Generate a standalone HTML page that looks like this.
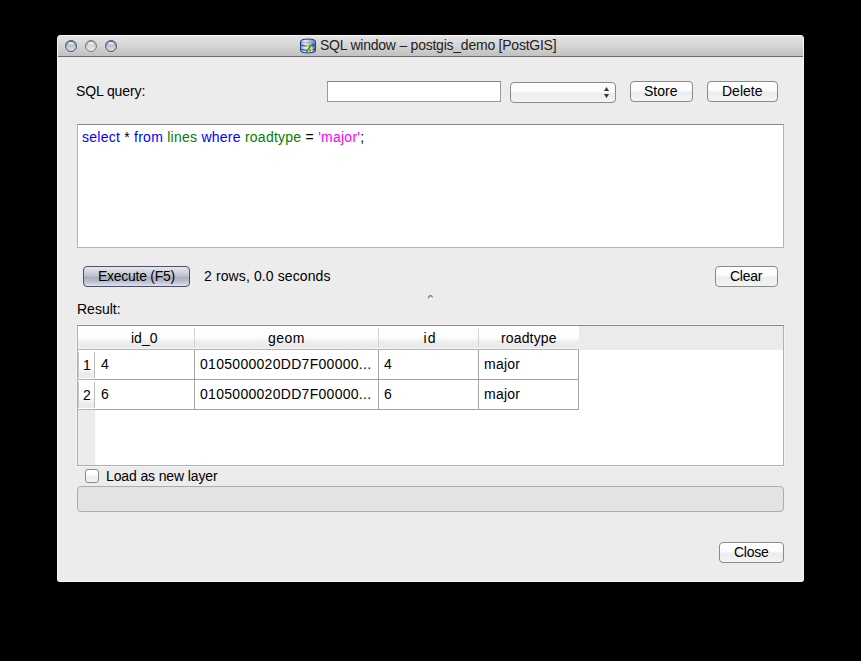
<!DOCTYPE html>
<html><head><meta charset="utf-8">
<style>
*{box-sizing:border-box;margin:0;padding:0}
html,body{width:861px;height:661px;background:#000;overflow:hidden}
body{position:relative;font-family:"Liberation Sans",sans-serif;font-size:14px;color:#000}
.a{position:absolute}
.t{position:absolute;white-space:pre;line-height:16px;height:16px}
#win{left:57px;top:35px;width:747px;height:547px;background:#ececec;border-radius:4px 4px 3px 3px;overflow:hidden;border:1px solid #f7f7f7;border-top:0}
#tb{left:-1px;top:0;width:747px;height:22px;background:linear-gradient(#e3e3e3 0%,#d4d4d4 50%,#c1c1c1 100%);border-top:1px solid #f7f7f7;border-bottom:1px solid #6c6c6c}
.light{width:12px;height:12px;border-radius:50%;top:4px;border:1px solid #4f5a6b;background:linear-gradient(#8593a8 0%,#aeb9c8 30%,#c3ccd8 60%,#d8dee7 100%);box-shadow:inset 0 1px 1px rgba(60,70,90,.5)}
.light::after{content:"";position:absolute;left:2px;top:1px;width:6px;height:3px;border-radius:50%;background:linear-gradient(rgba(255,255,255,.95),rgba(255,255,255,.2))}
.light.dis{border-color:#7c7c7c;background:linear-gradient(#b4b4b4 0%,#d0d0d0 35%,#dedede 65%,#ececec 100%);box-shadow:inset 0 1px 1px rgba(80,80,80,.4)}
.btn{position:absolute;height:21px;border:1px solid #8a8a8a;border-radius:4px;background:linear-gradient(#ffffff 0%,#fbfbfb 45%,#ececec 55%,#f4f4f4 100%)}
.h{font-size:14px}
.c{font-size:14px}
.rh{width:17px;height:26px;background:linear-gradient(#fff 0%,#fdfdfd 62%,#ececec 82%,#ebebeb 100%);border-left:1px solid #c6c6c6;border-right:1px solid #bcbcbc}
.field{position:absolute;background:#fff;border:1px solid #9a9a9a;border-top-color:#828282}
</style></head><body>
<div id="win" class="a">
  <div id="tb" class="a">
    <div class="a light" style="left:8px"></div>
    <div class="a light dis" style="left:28px"></div>
    <div class="a light" style="left:48px"></div>
  </div>
</div>
<!-- title -->
<svg class="a" style="left:300px;top:38px" width="16" height="16" viewBox="0 0 16 16">
<defs><linearGradient id="cy" x1="0" x2="1" y1="0" y2="0"><stop offset="0" stop-color="#7d93cc"/><stop offset=".3" stop-color="#e4ebf8"/><stop offset=".65" stop-color="#a9bbe0"/><stop offset="1" stop-color="#5570b0"/></linearGradient></defs>
<path d="M.5 3.2C.5 .4 15.5 .4 15.5 3.2V12.8C15.5 15.6 .5 15.6 .5 12.8Z" fill="url(#cy)" stroke="#22387c"/>
<path d="M1 3.6C2 5.2 14 5.2 15 3.6" fill="none" stroke="#8aa0d4" stroke-width=".8"/>
<path d="M.8 6.4C.8 8.6 15.2 8.6 15.2 6.4M.8 10.6C.8 12.8 15.2 12.8 15.2 10.6" fill="none" stroke="#22387c" stroke-width="1"/>
<path d="M7.6 6.6C9 7.8 9.8 10.6 9.2 13.6L7.4 13.9C7.7 11.6 7.1 9.6 6 8.4Z" fill="#e3ec34"/>
<path d="M10.8 7C12.4 8.4 13 11 12.6 14L11 14.1C11.2 11.8 10.6 9.6 9.7 8.4Z" fill="#e3ec34"/>
<path d="M13.6 5.2C11 7.4 8.4 10.6 6.3 14.2" fill="none" stroke="#2f8f2a" stroke-width="1.3"/>
</svg>
<div class="t" style="left:320px;top:37px;color:#222;letter-spacing:-0.235px">SQL window – postgis_demo [PostGIS]</div>
<!-- SQL query row -->
<div class="t" style="left:76px;top:83px;letter-spacing:-0.11px">SQL query:</div>
<div class="field" style="left:327px;top:81px;width:174px;height:21px"></div>
<div class="btn" style="left:510px;top:82px;width:106px;height:21px"></div>
<svg class="a" style="left:600px;top:84px" width="12" height="16" viewBox="0 0 12 16"><path d="M3.9 7H9.1L6.5 3Z" fill="#3a3a3a"/><path d="M3.9 10H9.1L6.5 14Z" fill="#3a3a3a"/></svg>
<div class="btn" style="left:630px;top:81px;width:63px"></div>
<div class="t" style="left:644px;top:83px">Store</div>
<div class="btn" style="left:707px;top:81px;width:71px"></div>
<div class="t" style="left:722px;top:83px">Delete</div>
<!-- editor -->
<div class="field" style="left:77px;top:124px;width:707px;height:124px;border-color:#b4b4b4;border-top-color:#8a8a8a"></div>
<div class="t" style="left:82px;top:129px;font-size:14px;letter-spacing:0.25px"><span style="color:#00f">select</span> * <span style="color:#00f">from</span> <span style="color:#008000">lines</span> <span style="color:#00f">where</span> <span style="color:#008000">roadtype</span> = <span style="color:#f0f">'major'</span>;</div>
<!-- execute row -->
<div class="btn" style="left:83px;top:266px;width:107px;border-color:#4e4f6a;background:linear-gradient(#e4e7ee 0%,#cdd1da 30%,#bcc1cd 48%,#a9afbe 55%,#b9bfcc 75%,#d2d6df 92%,#e2e5eb 100%)"></div>
<div class="t" style="left:98px;top:268px;letter-spacing:-0.27px">Execute (F5)</div>
<div class="t" style="left:204px;top:268px;letter-spacing:0.11px">2 rows, 0.0 seconds</div>
<div class="btn" style="left:715px;top:266px;width:63px"></div>
<div class="t" style="left:730px;top:268px;letter-spacing:-0.25px">Clear</div>
<div class="t" style="left:77px;top:301px">Result:</div>
<svg class="a" style="left:426px;top:292px" width="9" height="9" viewBox="0 0 9 9"><defs><linearGradient id="sp" x1="0" x2="1" y1="0" y2="1"><stop offset="0" stop-color="#555"/><stop offset="1" stop-color="#b0b0b0"/></linearGradient></defs><path d="M1.8 6.2C2.2 4 3.4 3 4.6 3C5.8 3 6.8 4 7.2 5.6L6 6C5.6 5 5.2 4.6 4.6 4.6C3.8 4.6 3.4 5.2 3 6.4Z" fill="url(#sp)"/><ellipse cx="4.8" cy="6.6" rx="1.4" ry=".9" fill="#fdfdfd"/></svg>
<!-- table -->
<div class="a" style="left:76px;top:324px;width:709px;height:143px;border:1px solid #f3f3f3"></div>
<div class="a" style="left:77px;top:325px;width:707px;height:141px;background:#fff;border:1px solid #b0b0b0;border-top-color:#8a8a8a"></div>
<!-- header -->
<div class="a" style="left:78px;top:326px;width:501px;height:23px;background:linear-gradient(#ffffff 0px,#fdfdfd 12px,#ededed 16px,#ebebeb 22px,#f3f3f3 22px,#f3f3f3 23px)"></div>
<div class="a" style="left:579px;top:326px;width:204px;height:24px;background:#ebebeb"></div>
<div class="a" style="left:78px;top:349px;width:501px;height:1px;background:#b4b4b4"></div>
<div class="a" style="left:194px;top:328px;width:1px;height:19px;background:#d4d4d4"></div>
<div class="a" style="left:378px;top:328px;width:1px;height:19px;background:#d4d4d4"></div>
<div class="a" style="left:478px;top:328px;width:1px;height:19px;background:#d4d4d4"></div>
<div class="t h" style="left:131px;top:330px">id_0</div>
<div class="t h" style="left:268px;top:330px;letter-spacing:0.5px">geom</div>
<div class="t h" style="left:423.5px;top:330px;letter-spacing:1.1px">id</div>
<div class="t h" style="left:501px;top:330px;letter-spacing:0.15px">roadtype</div>
<!-- row header strip -->
<div class="a" style="left:78px;top:350px;width:17px;height:115px;background:#ececec"></div>
<div class="a" style="left:78px;top:350px;width:17px;height:60px;background:#fff"></div>
<div class="a rh" style="left:78px;top:352px"></div>
<div class="a rh" style="left:78px;top:382px"></div>
<!-- grid lines -->
<div class="a" style="left:78px;top:379px;width:16px;height:1px;background:#b2b2b2"></div><div class="a" style="left:94px;top:379px;width:485px;height:1px;background:#a2a2a6"></div>
<div class="a" style="left:78px;top:409px;width:16px;height:1px;background:#b2b2b2"></div><div class="a" style="left:94px;top:409px;width:485px;height:1px;background:#a2a2a6"></div>
<div class="a" style="left:194px;top:350px;width:1px;height:60px;background:#a4a4a4"></div>
<div class="a" style="left:378px;top:350px;width:1px;height:60px;background:#a4a4a4"></div>
<div class="a" style="left:478px;top:350px;width:1px;height:60px;background:#a4a4a4"></div>
<div class="a" style="left:578px;top:350px;width:1px;height:60px;background:#a4a4a4"></div>
<div class="t c" style="left:83px;top:357px">1</div>
<div class="t c" style="left:101px;top:356px">4</div>
<div class="t c" style="left:200px;top:356px;letter-spacing:0.29px">0105000020DD7F00000...</div>
<div class="t c" style="left:384px;top:356px">4</div>
<div class="t c" style="left:484px;top:356px;letter-spacing:0.25px">major</div>
<div class="t c" style="left:83px;top:387px">2</div>
<div class="t c" style="left:101px;top:386px">6</div>
<div class="t c" style="left:200px;top:386px;letter-spacing:0.29px">0105000020DD7F00000...</div>
<div class="t c" style="left:384px;top:386px">6</div>
<div class="t c" style="left:484px;top:386px;letter-spacing:0.25px">major</div>
<!-- checkbox -->
<div class="btn" style="left:85px;top:469px;width:14px;height:14px;border-radius:3px"></div>
<div class="t" style="left:106px;top:468px;letter-spacing:-0.125px">Load as new layer</div>
<!-- progress -->
<div class="a" style="left:77px;top:486px;width:707px;height:26px;border:1px solid #acacac;border-radius:4px;background:#e3e3e3"></div>
<!-- close -->
<div class="btn" style="left:719px;top:542px;width:65px"></div>
<div class="t" style="left:734px;top:544px;letter-spacing:-0.25px">Close</div>
</body></html>
